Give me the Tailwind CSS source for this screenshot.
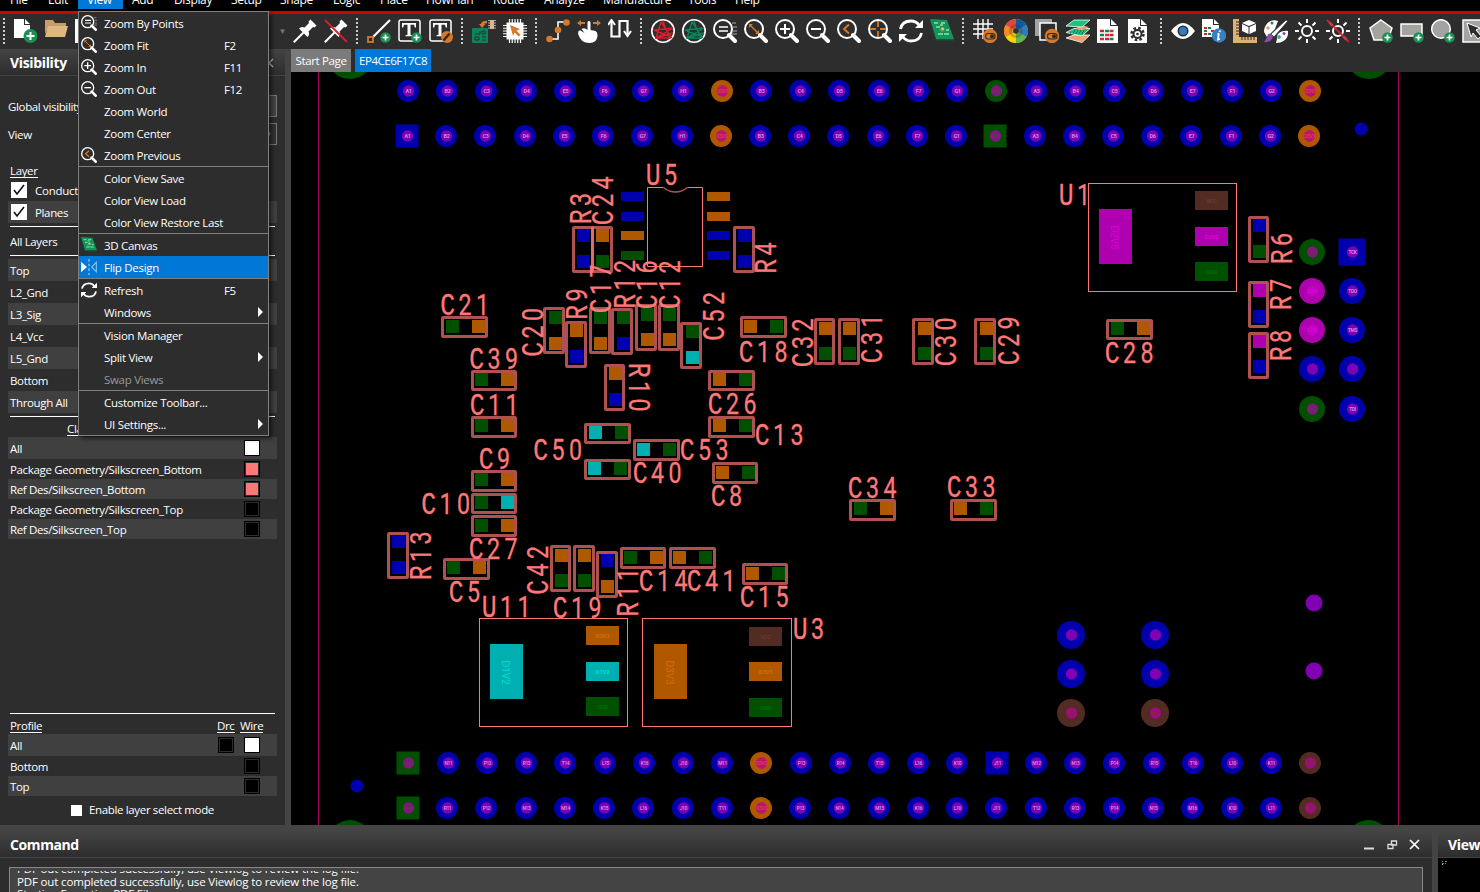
<!DOCTYPE html>
<html lang="en">
<head>
<meta charset="utf-8">
<title>PCB Editor</title>
<script src="https://cdn.jsdelivr.net/npm/@tailwindcss/browser@4"></script>
</head>
<body class="w-[1480px] h-[892px] overflow-hidden bg-[#2d2d2d] text-white text-[11.5px] leading-[16px] tracking-[-0.35px] font-['Open_Sans','Noto_Sans',sans-serif]">
<svg class="hidden">
  <defs>
    <g id="mag" fill="none" stroke="#fff"><circle cx="10" cy="10" r="9" stroke-width="2"/><path d="M16 16L22 22" stroke-width="4" stroke-linecap="round"/></g>
    <g id="plus"><circle cx="18.500" cy="18.500" r="5.300" fill="#1b8f54"/><path d="M18.500 15.500v6M15.500 18.500h6" stroke="#fff" stroke-width="1.700"/></g>
    <g id="toggle"><circle cx="17" cy="17" r="7.200" fill="#d6782a"/><rect x="12.500" y="14.500" width="9.500" height="5.500" rx="2.750" fill="#d6782a" stroke="#3a2a1c" stroke-width="1.100"/><circle cx="19" cy="17.200" r="2" fill="#3a2a1c"/></g>
    <g id="sunrays" fill="none" stroke="#fff" stroke-width="2"><circle cx="12" cy="12" r="5"/><path d="M12 0v4M12 20v4M0 12h4M20 12h4M3.500 3.500l3 3M17.500 17.500l3 3M3.500 20.500l3-3M17.500 6.500l3-3"/></g>
    <g id="net" fill="none" stroke-width="1.400"><path d="M10 3L5 19L22 9L3 11L20 18L10 3L14 8L19 19L5 19M14 8L12 2M5 19L22 14"/></g>
    <symbol id="i-new" viewBox="0 0 24 24"><path d="M1 0h10v6h6v13H1z M12 0l5 5h-5z" fill="#fff"/><circle cx="17.500" cy="17" r="7" fill="#1b8f54"/><path d="M17.500 13v8M13.500 17h8" stroke="#fff" stroke-width="2"/></symbol>
    <symbol id="i-open" viewBox="0 0 24 24"><path d="M1 1h8l2 3h11v4H5L1 15z" fill="#c69c67"/><path d="M4 7h20l-3 11H1z" fill="#deb880"/></symbol>
    <symbol id="i-pin" viewBox="0 0 24 24"><path d="M15.500 2.500L17.500 .5L23.500 6.500L21.500 8.500L20 8L15.500 12.500Q17 15.500 14.500 18L6 9.500Q8.500 7 11.500 8.500L16 4z" fill="#fff"/><path d="M10.500 13.500L.8 23.200" stroke="#fff" stroke-width="2"/></symbol>
    <symbol id="i-unpin" viewBox="0 0 24 24"><use href="#i-pin" width="24" height="24"/><path d="M1 1L23 23" stroke="#d51f2d" stroke-width="1.800"/></symbol>
    <symbol id="i-line" viewBox="0 0 24 24"><path d="M4 20L23 1" stroke="#fff" stroke-width="2.200"/><rect x="1" y="18" width="5" height="5" fill="#2d2d2d" stroke="#d6782a" stroke-width="1.800"/><use href="#plus"/></symbol>
    <symbol id="i-text" viewBox="0 0 24 24"><rect x="1" y="1" width="21" height="21" rx="2" fill="none" stroke="#fff" stroke-width="1.500"/><path d="M4 4h14v4.500h-1.200l-.8-2.800h-3.500v10l2 .6v1H7.500v-1l2-.6v-10H6l-.8 2.800H4z" fill="#fff"/></symbol>
    <symbol id="i-textadd" viewBox="0 0 24 24"><use href="#i-text" width="24" height="24"/><use href="#plus"/></symbol>
    <symbol id="i-textedit" viewBox="0 0 24 24"><use href="#i-text" width="24" height="24"/><circle cx="18" cy="18" r="6" fill="#d6782a"/><path d="M14.500 21.500l6-7" stroke="#2d2d2d" stroke-width="2.500"/></symbol>
    <symbol id="i-place" viewBox="0 0 24 24"><rect y="9" width="16" height="15" rx="1" fill="#08865a"/><path d="M3 15h5v-3M10 12h3v3h-3zM3 18h4v3H3zM10 18h4M10 21h4" fill="none" stroke="#2d2d2d"/><rect x="18" y="1" width="4" height="9" fill="#deb880"/><path d="M16 1.500h8M16 4h8M16 6.500h8M16 9h8" stroke="#bbb" stroke-width=".9"/><path d="M10 6q0-3 5-3" fill="none" stroke="#d6782a" stroke-width="2.400"/><path d="M7 5h6.500L10 9z" fill="#d6782a"/></symbol>
    <symbol id="i-chip" viewBox="0 0 24 24"><rect x="3.500" y="3.500" width="17" height="17" fill="#fff"/><path d="M6.500 0v24M9.250 0v24M12 0v24M14.750 0v24M17.500 0v24M0 6.500h24M0 9.250h24M0 12h24M0 14.750h24M0 17.500h24" stroke="#fff" stroke-width="1.200"/><path d="M7 6l10 4-3.500 1.800 4 4-1.800 1.800-4-4L10 17z" fill="#d6782a"/></symbol>
    <symbol id="i-connect" viewBox="0 0 24 24"><path d="M3 20h9v-9l0-8h8" fill="none" stroke="#fff" stroke-width="1.600"/><circle cx="3.500" cy="20" r="3.300" fill="#d6782a"/><circle cx="12" cy="11" r="3.300" fill="#d6782a"/><circle cx="20.500" cy="3.500" r="3.300" fill="#d6782a"/></symbol>
    <symbol id="i-slide" viewBox="0 0 24 24"><path d="M10.500 3q1.500-2 3 0v8l5 1q2 1 2 4c0 5-3 8-8 8-6 0-9-3-11-8-1-3 0-5 2-4.500l4 2.500-3-4q3-2 6 1z" fill="#fff"/><path d="M0 4l4-3v2h4v2H4v2zM24 4l-4-3v2h-4v2h4v2z" fill="#d6782a"/></symbol>
    <symbol id="i-delay" viewBox="0 0 24 24"><path d="M3.500 2v15.500h8V2h8v13" fill="none" stroke="#fff" stroke-width="2.200"/><path d="M0 6l3.500-5L7 6M16 12l3.500 5 3.500-5" fill="none" stroke="#fff" stroke-width="2"/></symbol>
    <symbol id="i-rats" viewBox="0 0 24 24"><circle cx="12" cy="12" r="11.200" fill="none" stroke="#fff" stroke-width="1.600"/><use href="#net" stroke="#d51f2d"/></symbol>
    <symbol id="i-unrats" viewBox="0 0 24 24"><circle cx="12" cy="12" r="11.200" fill="none" stroke="#fff" stroke-width="1.600"/><use href="#net" stroke="#08865a"/></symbol>
    <symbol id="i-zpoints" viewBox="0 0 24 24"><use href="#mag"/><path d="M6 8h9M6 12h9" stroke="#fff" stroke-width="1.700"/><path d="M19 4h4M20 8h4M20 12h4M19 15h5" stroke="#aaa"/></symbol>
    <symbol id="i-zfit" viewBox="0 0 24 24"><use href="#mag"/><path d="M6 6l8 8" stroke="#d6782a" stroke-width="1.500"/><path d="M5 5h4l-4 4zM15 15h-4l4-4z" fill="#d6782a"/></symbol>
    <symbol id="i-zin" viewBox="0 0 24 24"><use href="#mag"/><path d="M10 5v10M5 10h10" stroke="#fff" stroke-width="2"/></symbol>
    <symbol id="i-zout" viewBox="0 0 24 24"><use href="#mag"/><path d="M5 10h10" stroke="#fff" stroke-width="2"/></symbol>
    <symbol id="i-zprev" viewBox="0 0 24 24"><use href="#mag"/><path d="M12 5.500L7 10l5 4.500" fill="none" stroke="#d6782a" stroke-width="1.900"/></symbol>
    <symbol id="i-zcenter" viewBox="0 0 24 24"><use href="#mag"/><path d="M10 2v6M10 12v6M2 10h6M12 10h6" stroke="#d6782a" stroke-width="1.800"/></symbol>
    <symbol id="i-refresh" viewBox="0 0 24 24"><path d="M1.500 10Q3 2 12 2q5 0 8 4M22.500 14q-1.500 8-10.500 8-5 0-8-4" fill="none" stroke="#fff" stroke-width="2.800"/><path d="M24 1v8h-8zM0 23v-8h8z" fill="#fff"/></symbol>
    <symbol id="i-board" viewBox="0 0 24 24"><path d="M0 0l17 1 7 19-18 0z" fill="#15945a"/><path d="M0 0l6 20v2L0 3zM6 20h18v1.500H6z" fill="#0b5c38"/><path d="M4 4h4M6 8h4M8 15h5M14 15h5M11 4h4M10 6h3M16 11h3" stroke="#8fe0ae" stroke-width="1.500"/><circle cx="12.500" cy="10" r="1.800" fill="#e7c72b"/><path d="M9 11h3v2" stroke="#329de0" fill="none"/></symbol>
    <symbol id="i-grid" viewBox="0 0 24 24"><path d="M5 0v20M10 0v20M15 0v12M0 5h20M0 10h20M0 15h12" stroke="#fff" stroke-width="1.400"/><use href="#toggle"/></symbol>
    <symbol id="i-color" viewBox="0 0 24 24"><g fill="none" stroke-width="9.500"><circle cx="12" cy="12" r="7.200" stroke="#f4a12a"/><path d="M12 4.800A7.200 7.200 0 0 1 18.200 8.400" stroke="#0b5ba0"/><path d="M18.200 8.400A7.200 7.200 0 0 1 18.200 15.600" stroke="#2f7cc0"/><path d="M18.200 15.600A7.200 7.200 0 0 1 12 19.200" stroke="#63b64c"/><path d="M12 19.200A7.200 7.200 0 0 1 5.800 15.600" stroke="#ffd400"/><path d="M5.800 15.600A7.200 7.200 0 0 1 5.800 8.400" stroke="#f28c28"/><path d="M5.800 8.400A7.200 7.200 0 0 1 12 4.800" stroke="#e2473f"/></g><circle cx="12" cy="12" r="5.500" fill="none" stroke="#2d2d2d" stroke-opacity=".25" stroke-width="3"/><circle cx="12" cy="12" r="2.800" fill="#303030"/></symbol>
    <symbol id="i-shadow" viewBox="0 0 24 24"><path d="M0 0h17v17H0z" fill="#a5a3a0"/><path d="M5 4h16v17H5z" fill="#2d2d2d" stroke="#fff" stroke-width="1.500"/><use href="#toggle"/></symbol>
    <symbol id="i-stack" viewBox="0 0 24 24"><path d="M0 19l8-3 16 0-8 7.500z" fill="#eaa06c" stroke="#fff" stroke-width=".8"/><path d="M0 13.500l8-4 16 0-8 7.500z" fill="#10c07c" stroke="#fff" stroke-width=".8"/><path d="M4 14h13M8 12h12" stroke="#2d2d2d" stroke-dasharray="1 2"/><path d="M9 9.500l6-3.500 8 2-7 3.500z" fill="#eaa06c"/><path d="M0 7l8-6 16 0-8 7z" fill="#14c682" stroke="#fff" stroke-width=".8"/></symbol>
    <symbol id="i-report" viewBox="0 0 24 24"><path d="M0 0h13v7h8v17H0zM14 0l6 6h-6z" fill="#fff"/><path d="M3 12h4M12.500 16h4M8 20h4" stroke="#d51f2d" stroke-width="2.600"/><path d="M8 12h4M3 16h4M12.500 20h4" stroke="#08865a" stroke-width="2.600"/><path d="M12.500 12h4M8 16h4M3 20h4" stroke="#c33" stroke-width="2.600"/></symbol>
    <symbol id="i-params" viewBox="0 0 24 24"><path d="M0 0h12v7h7v17H0zM13 0l6 6h-6z" fill="#fff"/><circle cx="9.500" cy="15" r="6" fill="none" stroke="#2d2d2d" stroke-width="2.500" stroke-dasharray="2.600 2.100"/><circle cx="9.500" cy="15" r="4" fill="#fff" stroke="#2d2d2d" stroke-width="2"/><circle cx="9.500" cy="15" r="1.300" fill="#2d2d2d"/></symbol>
    <symbol id="i-eye" viewBox="0 0 24 24"><path d="M0 12Q12-4 24 12 12 28 0 12z" fill="#fff"/><circle cx="12" cy="12" r="5.500" fill="#2d2d2d"/><circle cx="12" cy="12" r="4" fill="#2f7cc0"/></symbol>
    <symbol id="i-info" viewBox="0 0 24 24"><path d="M0 0h11v6h6v12H0zM12 0l5 5h-5z" fill="#fff"/><path d="M2 9h3M9 12h3M2 15h3" stroke="#d51f2d" stroke-width="2"/><path d="M6 9h3M2 12h3M6 15h3" stroke="#08865a" stroke-width="2"/><circle cx="17" cy="16.500" r="7.200" fill="#3a7fc1"/><path d="M18 11.500l-.3 1.600M16.800 14.500L16 20.500l2-.5M15.500 15h1.500" stroke="#fff" stroke-width="1.800" fill="none"/></symbol>
    <symbol id="i-ruler" viewBox="0 0 24 24"><path d="M0 0h6v18h18v6H0z" fill="#deb170"/><path d="M3 3h3M3 6h3M3 9h3M3 12h3M3 15h3M9 18v3M12 18v3M15 18v3M18 18v3M21 18v3" stroke="#2d2d2d"/><path d="M9 4l7-3 7 3-7 3zM9 5l6.500 3v7L9 12zM23 5l-6.500 3v7l6.500-3z" fill="#fff"/></symbol>
    <symbol id="i-palette" viewBox="0 0 24 24"><path d="M0 13C0 4 8-1 14 2l-3 8-8 8zM13 20c-1-5 4-9 11-8 1 8-5 12-12 12z" fill="#fff"/><circle cx="8" cy="4" r="1.500" fill="#15945a"/><circle cx="4" cy="9" r="1.800" fill="#eaa06c"/><circle cx="15" cy="18" r="1.900" fill="#4a9"/><circle cx="20" cy="14.500" r="1.500" fill="#84a"/><path d="M22 1l2 1L10 18l-3-3z" fill="#fff" stroke="#2d2d2d" stroke-width=".8"/><path d="M4 15q4-1 5 3-2 6-9 5 2-2 4-8z" fill="#8b4fa8"/></symbol>
    <symbol id="i-sun" viewBox="0 0 24 24"><use href="#sunrays"/></symbol>
    <symbol id="i-sunoff" viewBox="0 0 24 24"><use href="#sunrays"/><path d="M1 1L23 23" stroke="#d51f2d" stroke-width="1.800"/></symbol>
    <symbol id="i-poly" viewBox="0 0 24 24"><path d="M12 1l11 8-4 12H5L1 9z" fill="#a5a3a0" stroke="#fff" stroke-width="1.500"/><use href="#plus"/></symbol>
    <symbol id="i-rect" viewBox="0 0 24 24"><rect x="1" y="5" width="21" height="12" fill="#a5a3a0" stroke="#fff" stroke-width="1.500"/><use href="#plus"/></symbol>
    <symbol id="i-circle" viewBox="0 0 24 24"><circle cx="10" cy="10" r="9.300" fill="#a5a3a0" stroke="#fff" stroke-width="1.500"/><use href="#plus"/></symbol>
    <symbol id="i-select" viewBox="0 0 24 24"><rect x="1" y="1" width="22" height="22" fill="#a5a3a0" stroke="#fff" stroke-width="1.500"/><path d="M5 4l13 5-4 2 5 6-3 3-5-6-2 4z" fill="#2d2d2d" stroke="#fff"/></symbol>
    <symbol id="i-flip" viewBox="0 0 24 24"><path d="M0 4l9 8-9 8z" fill="#fff"/><path d="M12 0v24" stroke="#8fc4f2" stroke-width="2" stroke-dasharray="4 3"/><path d="M23 5v14l-7-7z" fill="none" stroke="#8fc4f2" stroke-width="1.600"/></symbol>
  </defs>
</svg>

<div class="relative flex flex-col w-[1480px] h-[892px]">
  <!-- menu bar -->
  <nav id="menubar" class="flex h-[11px] shrink-0 bg-black overflow-hidden pl-[1px] text-[12px]"></nav>
  <div class="h-[3px] shrink-0 bg-[#d00000]"></div>
  <!-- toolbar -->
  <div id="toolbar" class="flex items-center h-[35px] shrink-0 bg-[#2d2d2d] overflow-hidden pb-[1px]"></div>

  <div class="flex h-[776px] shrink-0">
    <!-- visibility panel -->
    <aside class="w-[285px] shrink-0 flex flex-col">
      <header class="flex items-center justify-between h-[27px] shrink-0 pl-[10px] pr-[11px] pt-[2px] bg-linear-to-b from-[#444] to-[#2d2d2d] border-b border-[#444]">
        <h2 class="text-[14px] font-bold tracking-[-0.35px]">Visibility</h2>
        <svg class="w-[10px] h-[10px]" viewBox="0 0 10 10"><path d="M1 1l8 8M9 1l-8 8" stroke="#bbb" stroke-width="1.500"/></svg>
      </header>
      <div class="flex flex-col h-[749px] px-2">
        <div class="flex items-center justify-between mt-[19px] h-[22px] w-[269px]"><span class="pt-px">Global visibility</span><span class="w-[90px] h-[22px] bg-[#444] border border-[#777]"></span></div>
        <div class="flex items-center justify-between mt-[6px] h-[22px] w-[269px]"><span class="pt-px">View</span><span class="flex items-center justify-end pr-1 w-[190px] h-[22px] bg-[#333] border border-[#777] text-[8px] text-[#999]">▼</span></div>
        <div class="mt-[18px] h-[16px] pl-[2px]"><span class="border-b border-white leading-[13px] inline-block">Layer</span></div>
        <div class="flex items-center gap-2 h-[22px] pl-[3px]"><svg class="w-[16px] h-[16px] bg-white" viewBox="0 0 16 16"><path d="M3 8l3 4 7-9" fill="none" stroke="#111" stroke-width="1.600"/></svg><span class="pt-[2px] tracking-[-0.25px]">Conductors</span></div>
        <div class="flex items-center gap-2 h-[22px] pl-[3px] w-[269px] bg-[#404040]"><svg class="w-[16px] h-[16px] bg-white" viewBox="0 0 16 16"><path d="M3 8l3 4 7-9" fill="none" stroke="#111" stroke-width="1.600"/></svg><span class="pt-[2px]">Planes</span></div>
        <div class="mt-[3px] ml-[2px] w-[265px] h-px bg-white"></div>
        <div class="flex items-center h-[28px] pl-[2px] pt-[1px]">All Layers</div>
        <div class="ml-[2px] w-[265px] h-px bg-white"></div>
        <div id="layers" class="mt-[3px] w-[269px]"></div>
        <div class="mt-[3px] ml-[2px] w-[265px] h-px bg-white shrink-0"></div>
        <div class="h-[20px] pl-[59px] pt-[4px] shrink-0"><span class="border-b border-white leading-[13px] inline-block">Class</span></div>
        <div id="classes" class="w-[269px]"></div>
        <div class="mt-[174px] ml-[2px] w-[265px] h-px bg-white shrink-0"></div>
        <div class="flex items-start h-[20px] pt-[5px] pl-[2px] shrink-0 leading-[13px]"><span class="w-[207px] flex"><span class="border-b border-white">Profile</span></span><span class="w-[23px] flex"><span class="border-b border-white">Drc</span></span><span class="border-b border-white">Wire</span></div>
        <div id="profile" class="w-[269px]"></div>
        <div class="flex items-center gap-[7px] h-[28px] pl-[63px]"><span class="w-[11px] h-[11px] bg-white"></span><span class="pb-[1px]">Enable layer select mode</span></div>
      </div>
    </aside>
    <div class="w-[6px] shrink-0 bg-[#444]"></div>
    <main class="flex flex-col w-[1189px]">
      <div class="flex h-[23px] shrink-0 gap-1"><span class="flex items-center justify-center w-[60px] bg-[#7b7b7b]">Start Page</span><span class="flex items-center justify-center w-[76px] bg-[#0078d7] tracking-[-0.45px]">EP4CE6F17C8</span></div>
      <svg id="board" class="block w-[1189px] h-[753px] bg-black" viewBox="291 72 1189 753" font-family="Roboto, sans-serif"></svg>
    </main>
  </div>

  <!-- command window -->
  <div class="flex h-[67px] shrink-0">
    <section class="flex flex-col w-[1432px]">
      <header class="flex items-center h-[33px] shrink-0 pt-[7px] pl-[10px] pr-[12px] bg-linear-to-b from-[#444] from-20% to-[#2d2d2d] border-b border-[#444]">
        <h2 class="text-[14px] font-bold tracking-[-0.4px] grow pt-[1px]">Command</h2>
        <svg class="w-[58px] h-[14px]" viewBox="0 0 58 14"><path d="M2 10.500h10" stroke="#ddd" stroke-width="2"/><path d="M29.500 3h5v4h-5zM26 6.500h5v4h-5z" fill="#2d2d2d" stroke="#ddd" stroke-width="1.300"/><path d="M48 2l9 9M57 2l-9 9" stroke="#fff" stroke-width="1.700"/></svg>
      </header>
      <div class="mt-[9px] ml-[9px] w-[1414px] h-[26px] border border-b-0 border-[#888] bg-[#444] overflow-hidden pl-[7px] pt-[3px]">
        <div class="h-[22px] overflow-hidden"><div class="-mt-[8px] text-[11.5px] leading-[12.5px] tracking-[-0.15px]">PDF out completed successfully, use Viewlog to review the log file.<br>PDF out completed successfully, use Viewlog to review the log file.<br>Starting Exporting PDF File...</div></div>
      </div>
    </section>
    <div class="w-[6px] bg-[#444]"></div>
    <section class="flex flex-col w-[42px] overflow-hidden">
      <header class="flex items-center h-[33px] shrink-0 pt-[7px] pl-[10px] bg-linear-to-b from-[#444] from-20% to-[#2d2d2d] border-b border-[#444]"><h2 class="text-[14px] font-bold tracking-[-0.35px] pt-[1px]">View</h2></header>
      <svg class="w-[42px] h-[34px] bg-black" viewBox="0 0 42 34"><path d="M4 3.500h1M7 3.500h2M4 5.500h2M7 5.500h1" stroke="#5a9a4a"/><path d="M4 6.500h1" stroke="#bbb"/></svg>
    </section>
  </div>

  <!-- open View menu -->
  <div id="menu" class="absolute left-[78px] top-[11px] w-[191px] border border-[#808080] bg-[#2d2d2d] shadow-[3px_3px_4px_rgba(0,0,0,0.5)]"></div>
</div>

<script>
const $ = id => document.getElementById(id);

$('menubar').innerHTML = [['File',38],['Edit',39],['View',45],['Add',42],['Display',57],['Setup',49],['Shape',53],['Logic',47],['Place',46],['FlowPlan',67],['Route',51],['Analyze',59],['Manufacture',85],['Tools',47],['Help',40]]
  .map(([t, w]) => `<span class="shrink-0 h-[9px] pl-[9px] ${t === 'View' ? 'bg-[#0078d7]' : ''}" style="width:${w}px"><span class="block -mt-[8px]">${t}</span></span>`).join('');

const icon = n => `<span class="w-[31px] shrink-0 flex justify-center"><svg class="w-[24px] h-[24px]"><use href="#i-${n}"/></svg></span>`;
const sep = `<span class="w-[12px] shrink-0 flex justify-center"><span class="w-0 h-[26px] border-l-2 border-dotted border-[#ccc]"></span></span>`;
const groups = ['pin unpin','line textadd textedit','place chip','connect slide delay','rats unrats zpoints zfit zin zout zprev zcenter refresh board','grid color shadow stack report params','eye info ruler palette sun sunoff','poly rect circle select'];
$('toolbar').innerHTML = `<span class="flex items-center w-[289px] shrink-0 pl-[3px]"><span class="w-0 h-[26px] border-l-2 border-dotted border-[#ccc] mr-[4px]"></span>${icon('new')}${icon('open')}${icon('report')}<span class="grow"></span><span class="text-[8px] text-[#777] pr-[3px]">▼</span></span>`
  + groups.map(g => g.split(' ').map(icon).join('')).join(sep);

const swatch = c => `<span class="w-[16px] h-[16px] border border-black p-px ${c === 'w' ? 'bg-white' : 'bg-[#2d2d2d]'}"><span class="block w-full h-full ${c === 'w' ? 'bg-white' : c === 'p' ? 'bg-[#ff7878]' : 'bg-black'}"></span></span>`;
const row = (t, i, h, sw) => `<div class="flex items-center justify-between pl-[2px] pr-[17px] ${h === 22 ? 'h-[22px]' : 'h-[20px]'} ${i ? 'bg-[#404040]' : ''}"><span class="${h === 22 ? 'pt-[1px]' : 'pt-[2px]'}">${t}</span><span class="flex gap-[10px]">${sw}</span></div>`;
$('layers').innerHTML = ['Top','L2_Gnd','L3_Sig','L4_Vcc','L5_Gnd','Bottom','Through All'].map((t, i) => row(t, i % 2 === 0, 22, '')).join('');
$('classes').innerHTML = row('All', 1, 22, swatch('w')) + row('Package Geometry/Silkscreen_Bottom', 0, 20, swatch('p')) + row('Ref Des/Silkscreen_Bottom', 1, 20, swatch('p')) + row('Package Geometry/Silkscreen_Top', 0, 20, swatch('k')) + row('Ref Des/Silkscreen_Top', 1, 20, swatch('k'));
$('profile').innerHTML = row('All', 1, 22, swatch('k') + swatch('w')) + row('Bottom', 0, 20, swatch('k')) + row('Top', 1, 20, swatch('k'));

$('menu').innerHTML = [['Zoom By Points','','zpoints'],['Zoom Fit','F2','zfit'],['Zoom In','F11','zin'],['Zoom Out','F12','zout'],['Zoom World'],['Zoom Center'],['Zoom Previous','','zprev'],0,['Color View Save'],['Color View Load'],['Color View Restore Last'],0,['3D Canvas','','board'],['Flip Design','','flip'],0,['Refresh','F5','refresh'],['Windows','>'],0,['Vision Manager'],['Split View','>'],['Swap Views'],0,['Customize Toolbar...'],['UI Settings...','>']]
  .map(m => !m ? '<div class="h-px bg-[#808080]"></div>' : `<div class="flex items-center h-[22px] pl-[2px] ${m[0] === 'Flip Design' ? 'bg-[#0078d7]' : ''} ${m[0] === 'Swap Views' ? 'text-[#999]' : ''}"><span class="w-[23px] shrink-0">${m[2] ? `<svg class="w-[16px] h-[16px]" viewBox="0 0 24 24"><use href="#i-${m[2]}"/></svg>` : ''}</span><span class="w-[120px] shrink-0 whitespace-nowrap pt-[1px] tracking-[-0.3px]">${m[0]}</span>${m[1] === '>' ? '<span class="ml-[34px] w-0 h-0 border-y-5 border-y-transparent border-l-5 border-l-white"></span>' : `<span class="pt-[1px]">${m[1] || ''}</span>`}</div>`).join('');

// board drawing
const C = { g:'#005000', o:'#af5800', b:'#0000af', c:'#00afaf', m:'#af00af', n:'#522b23' };
const HI = { g:'#006c00', o:'#d86c00', b:'#c8a0ff', c:'#00dcdc', m:'#dc00dc', n:'#6b392e' };
let s = '';
const rect = (x, y, w, h, c) => s += `<rect x="${x}" y="${y}" width="${w}" height="${h}" fill="${C[c]}"/>`;
const mini = (x, y, t, c, size = 5) => s += `<text x="${x}" y="${y + size * .36}" font-size="${size}" font-weight="700" text-anchor="middle" fill="${c}">${t}</text>`;

s += '<path d="M318.500 72V825M1398.500 72V825" stroke="#a0004f" shape-rendering="crispEdges"/>';
[[350,56,23],[1369,56,23],[350,842,22],[1368.5,842,22]].forEach(([x, y, r]) => s += `<circle cx="${x}" cy="${y}" r="${r}" fill="${C.g}"/>`);

const INNER = { b:'#8000b4', g:'#80177a', o:'#b81470', n:'#a00a7c', m:'#c400c4' };
function pin(x, y, r, c, sq, t) {
  if (sq) rect(x - r - .5, y - r - .5, 2 * r + 1, 2 * r + 1, c);
  else s += `<circle cx="${x}" cy="${y}" r="${r}" fill="${C[c]}"/>`;
  s += `<circle cx="${x + .5}" cy="${y}" r="5.700" fill="${INNER[c]}"/>`;
  if (t) mini(x + .5, y, t, c === 'b' ? '#c98ae2' : c === 'o' ? '#dc3c50' : c === 'g' ? '#6a3060' : HI[c], t.length < 3 ? 5.5 : 4.8);
}
const rows = [
  [408, 91, {8:'o',15:'g',23:'o'}, [], 'A B C D E F G H'],
  [407, 136, {8:'o',15:'g',23:'o'}, [0,15], 'A B C D E F G H'],
  [408.4, 763, {0:'g',9:'o',23:'n'}, [0,15], 'M N P R T L K J'],
  [408, 808, {0:'g',9:'o',23:'n'}, [0], 'T R P N M K L J']];
rows.forEach(([x0, y, col, sq, names], ri) => {
  const L = names.split(' ');
  for (let i = 0; i < 24; i++) {
    const c = col[i] || 'b';
    pin(Math.round(x0 + i * 39.22), y, 11, c, sq.includes(i), c === 'o' ? 'D3V3' : c === 'g' ? 'GND' : c === 'n' ? 'VCC' : L[i % 8] + (ri < 2 ? 1 + i % 7 : 10 + i % 7));
  }
});
[252,291,330,369,409].forEach((y, i) => { pin(1312, y, 13, 'gmmbg'[i], 0, ['GND','D2V5','D2V5','','GND'][i]); pin(1352, y, 13, 'b', i === 0, ['TCK','TDO','TMS','','TDI'][i]); });
[635,674,713].forEach((y, i) => [1071,1155].forEach(x => pin(x, y, 14, 'bbn'[i], 0, i === 2 ? 'VCC' : '')));
[[1314,603,8.5,'#8000b4'],[1314,671,8.5,'#8000b4'],[1361,129,6.5,C.b],[357,786,6.5,C.b]].forEach(([x, y, r, f]) => s += `<circle cx="${x}" cy="${y}" r="${r}" fill="${f}"/>`);

// regulators: outline, tab pad, three lead pads
[[1088.5,183.5,148,1099,209,'m','D2V5',1195,[191,227,262],'nmg',['VCC','D2V5','GND']],
 [479.5,618.5,148,490,644,'c','D1V2',586,[626,662,697],'ocg',['D3V3','D1V2','GND']],
 [642.5,618.5,149,654,644,'o','D3V3',749,[627,662,698],'nog',['VCC','D3V3','GND']]].forEach(([x, y, w, px, py, c, t, qx, qy, qc, qt]) => {
  s += `<rect x="${x}" y="${y}" width="${w}" height="108" fill="none" stroke="#ff7878"/>`;
  rect(px, py, 33, 55, c);
  s += `<text transform="translate(${px + 12} ${py + 28.5}) rotate(90)" text-anchor="middle" font-size="10.500" fill="${HI[c]}">${t}</text>`;
  qy.forEach((yy, i) => { rect(qx, yy, 33, 19, qc[i]); mini(qx + 16.5, yy + 9.5, qt[i], HI[qc[i]], 6); });
});
// U5
s += '<path d="M663.500 187.500H647.500V266.500H702.500V187.500H687.500" fill="none" stroke="#ff7878"/><path d="M663.500 187.500Q669 192 675.500 192T687.500 187.500" fill="none" stroke="#ad5858" stroke-width="1.500"/>';
[192,212,231,251].forEach((y, i) => { rect(621, y, 23, 9, 'bbog'[i]); rect(707, y, 23, 9, 'oobb'[i]); });

// two-terminal parts: x y w h, pad1 x y colour, pad2 x y colour
const parts = `441 316 47 22 446 320 g 472 320 o;471 370 46 21 475 373 g 501 373 o;572 226 22 47 577 229 b 577 255 b;591 226 22 47 596 229 o 596 255 g
733 226 22 47 738 229 b 738 255 b;543 307 22 47 549 311 g 549 337 o;565 321 22 47 570 324 o 570 350 b;589 307 22 47 594 311 g 594 337 o
611 308 22 47 617 311 g 617 337 b;635 304 22 47 641 308 g 641 333 o;658 304 22 47 663 308 g 663 333 o;680 322 22 47 686 325 g 686 351 c
740 316 47 22 744 320 o 770 320 g;604 364 21 47 609 367 o 609 393 b;708 370 47 21 713 373 o 739 373 g;471 416 46 22 475 419 g 501 419 o
584 423 47 21 589 426 c 615 426 g;633 439 47 22 637 443 c 663 443 g;584 459 47 21 588 462 c 614 462 g;708 416 47 22 713 419 o 739 419 g
712 462 46 22 716 466 o 742 466 g;471 470 46 22 475 473 g 501 473 o;471 493 46 21 475 496 g 501 496 c;471 515 46 22 475 519 g 501 519 o
387 532 22 47 392 535 b 392 561 b;443 558 47 22 447 561 g 473 561 o;550 545 21 47 555 549 o 555 574 g;573 545 22 47 578 549 o 578 574 g
596 551 22 47 601 554 b 601 580 o;620 547 46 22 624 551 g 650 551 o;669 547 47 22 673 551 o 699 551 g;742 563 46 22 746 567 o 772 567 g
814 318 21 47 819 322 o 819 347 g;838 318 22 47 843 322 o 843 347 g;912 318 22 47 918 322 o 918 347 g;974 318 22 47 980 322 o 980 347 g
849 499 47 22 854 502 g 880 502 o;950 499 47 22 954 502 o 980 502 g;1106 319 47 21 1111 322 g 1137 322 o
1248 216 21 47 1253 219 b 1253 245 g;1248 281 21 47 1253 284 m 1253 310 b;1248 332 21 47 1253 335 m 1253 360 b`;
parts.split(/[;\n]/).forEach(p => {
  const [x, y, w, h, ax, ay, ac, bx, by, bc] = p.trim().split(' ').map(v => isNaN(v) ? v : +v);
  rect(ax, ay, 13, 13, ac); rect(bx, by, 13, 13, bc);
  s += `<rect x="${x + 1.5}" y="${y + 1.5}" width="${w - 3}" height="${h - 3}" rx=".5" fill="none" stroke="#ff7878" stroke-opacity=".68" stroke-width="3"/>`;
});

// reference designators: name, first glyph centre, baseline, rotation
const K = .8;
function label(t, x, y, a) {
  const spans = [...t].map((ch, i) => `<tspan x="${i * 17.4 / K}"${/\d/.test(ch) ? '' : ' font-family="Liberation Mono" font-size="31"'}>${ch}</tspan>`).join('');
  s += `<text transform="translate(${x} ${y}) rotate(${a}) scale(${K} 1)" text-anchor="middle" font-size="29" fill="#ff7878" stroke="#ff7878" stroke-width=".3">${spans}</text>`;
}
'C21 447.5 315;C39 476.5 368.5;C11 477 414.5;C18 746 361.5;C26 715 413.5;U5 653 184.5;C50 540.5 459.5;C53 687 460;C40 640 483;C13 762 444.5;C8 718 505.5;C9 486 468.5;C10 428.5 513.5;C27 476 558.5;C5 456 602;U11 489 616.5;C19 560 617.5;C14 646 590.5;C41 694 590.5;C15 747 606.5;C34 855 497.5;C33 954 496.5;C28 1112 362.5;U1 1066 204.5;U3 800 638.5'
  .split(';').forEach(l => { const [t, x, y] = l.split(' '); label(t, x, y, 0); });
'R3 591 217;C24 612.5 218;C20 543 349.5;R9 586.5 312.5;C17 610.5 306;R12 635 301.5;C16 656.5 302;C12 680 302;C52 723.5 333.5;R4 776 266.5;R13 431 573;C42 548 587.5;R11 638 609.5;C32 813 360;C31 881.5 356;C30 955.5 359;C29 1018.5 358;R6 1291.5 257;R7 1291 303;R8 1291 354'
  .split(';').forEach(l => { const [t, x, y] = l.split(' '); label(t, x, y, -90); });
label('R10', 629, 370, 90);
$('board').innerHTML = s;
</script>
</body>
</html>
